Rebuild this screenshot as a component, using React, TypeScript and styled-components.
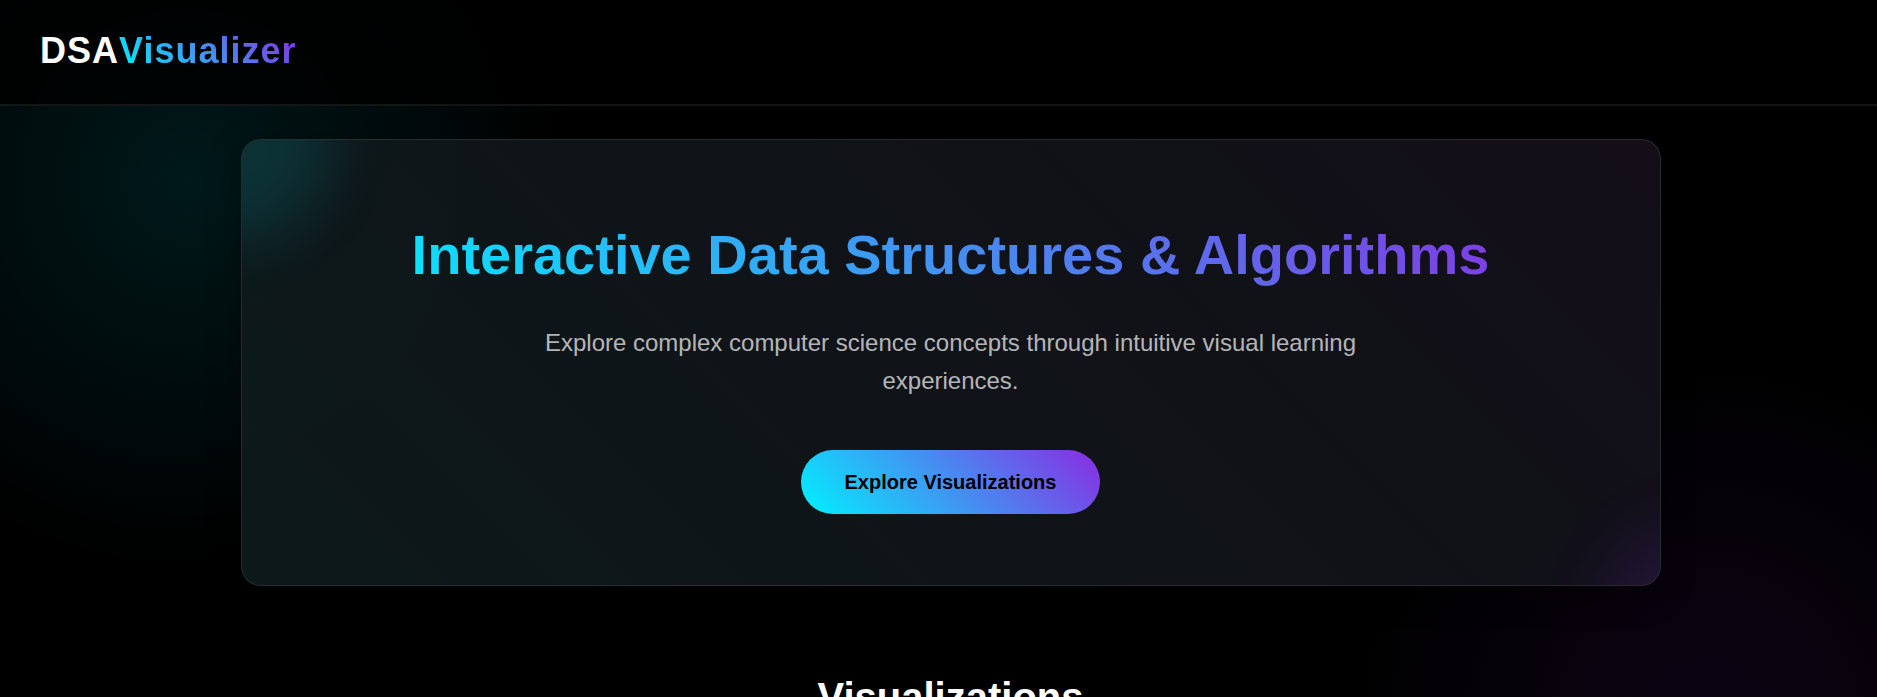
import React from "react";
import styled, { createGlobalStyle } from "styled-components";

const accent = "linear-gradient(45deg, #00f2ff, #8a2be2)";

const GlobalStyle = createGlobalStyle`
  * { box-sizing: border-box; }
  html { background: #000; }
  body {
    margin: 0;
    color: #fff;
    font-family: "Liberation Sans", Arial, sans-serif;
  }
  body::-webkit-scrollbar { display: none; }
`;

const Page = styled.div`
  min-height: 100vh;
  background:
    radial-gradient(circle at 10% 180px, rgba(0, 242, 255, 0.1), transparent 390px),
    radial-gradient(circle at 91% 720px, rgba(138, 43, 226, 0.09), transparent 360px),
    #000;
`;

const Header = styled.header`
  padding: 30px 40px 32px;
  background: rgba(0, 0, 0, 0.8);
  border-bottom: 2px solid rgba(255, 255, 255, 0.08);
`;

const Logo = styled.a`
  display: block;
  width: fit-content;
  color: #fff;
  font-size: 36px;
  font-weight: 700;
  line-height: 42px;
  letter-spacing: 1px;
  text-decoration: none;
`;

const GradientText = styled.span`
  display: inline-block;
  background: ${accent};
  background-clip: text;
  -webkit-background-clip: text;
  color: transparent;
`;

const Main = styled.main`
  padding: 33px 40px 0 64px;
`;

const Hero = styled.section`
  position: relative;
  max-width: 1420px;
  margin: 0 auto;
  padding: 80px 64px 71px;
  overflow: hidden;
  text-align: center;
  border: 1px solid rgba(255, 255, 255, 0.1);
  border-radius: 20px;
  background:
    linear-gradient(45deg, rgba(0, 242, 255, 0.05), rgba(138, 43, 226, 0.05)),
    rgba(15, 15, 15, 0.87);
  box-shadow: 0 8px 32px rgba(0, 0, 0, 0.37);
`;

const Glow = styled.div<{ $corner: "start" | "end" }>`
  position: absolute;
  width: 200px;
  height: 200px;
  border-radius: 50%;
  filter: blur(30px);
  ${({ $corner }) =>
    $corner === "start"
      ? "top: -100px; left: -110px; background: rgba(0, 242, 255, 0.12);"
      : "bottom: -140px; right: -140px; background: rgba(138, 43, 226, 0.14);"}
`;

const HeroTitle = styled.h1`
  position: relative;
  margin: 0 0 34px;
  font-size: 56px;
  line-height: 70px;
  background: ${accent};
  background-clip: text;
  -webkit-background-clip: text;
  color: transparent;
`;

const HeroText = styled.p`
  position: relative;
  max-width: 820px;
  margin: 0 auto 50px;
  color: rgba(255, 255, 255, 0.7);
  font-size: 24px;
  line-height: 38px;
`;

const ExploreButton = styled.button`
  position: relative;
  display: block;
  margin: 0 auto;
  padding: 20px 44px;
  border: 0;
  border-radius: 50px;
  background: ${accent};
  color: #000;
  font-family: inherit;
  font-size: 20px;
  font-weight: 700;
  line-height: 24px;
  cursor: pointer;
`;

const SectionTitle = styled.h2`
  margin: 88px 0 0;
  text-align: center;
  font-size: 40px;
  line-height: 46px;
`;

export default function App() {
  return (
    <Page>
      <GlobalStyle />
      <Header>
        <Logo href="#">
          DSA<GradientText>Visualizer</GradientText>
        </Logo>
      </Header>
      <Main>
        <Hero>
          <Glow $corner="start" />
          <Glow $corner="end" />
          <HeroTitle>Interactive Data Structures &amp; Algorithms</HeroTitle>
          <HeroText>
            Explore complex computer science concepts through intuitive visual
            learning experiences.
          </HeroText>
          <ExploreButton type="button">Explore Visualizations</ExploreButton>
        </Hero>
        <SectionTitle>Visualizations</SectionTitle>
      </Main>
    </Page>
  );
}
